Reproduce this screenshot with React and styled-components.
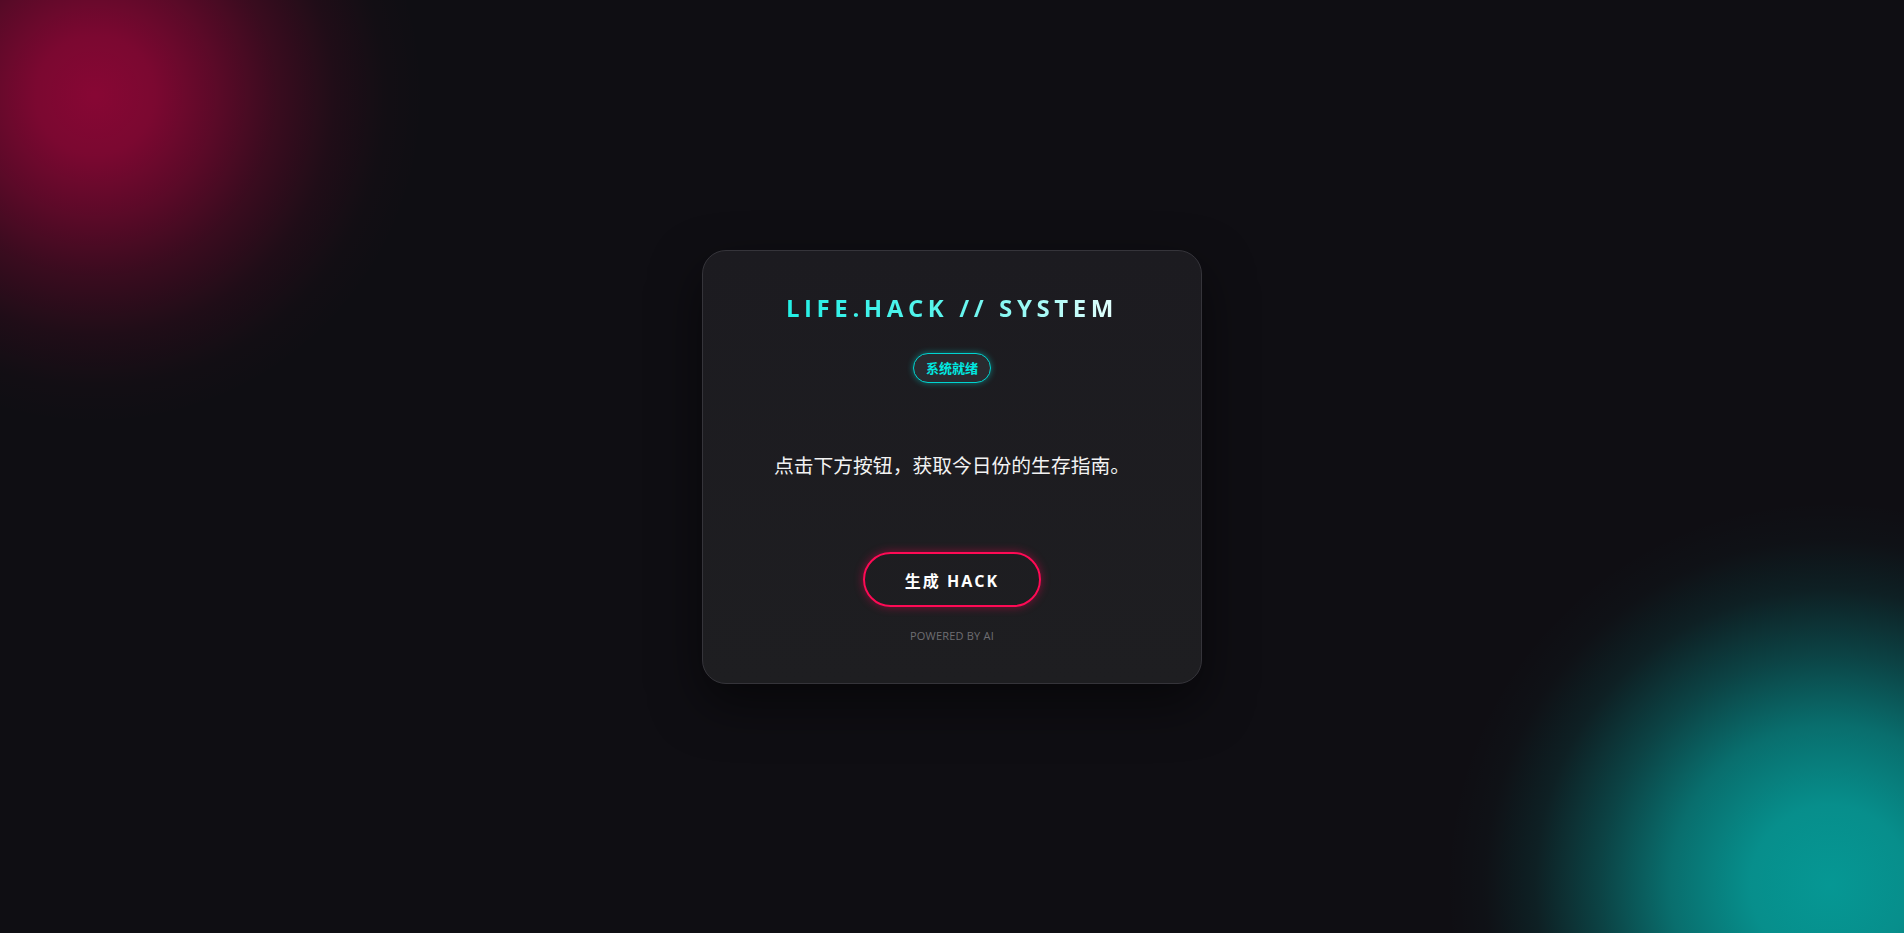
import React from 'react'
import styled, { createGlobalStyle } from 'styled-components'

const GlobalStyle = createGlobalStyle`
html, body {
  margin: 0;
  padding: 0;
  background: #0f0e13;
}
* {
  box-sizing: border-box;
}
`

const App = () => {
  return (
    <>
      <GlobalStyle />
      <Page>
        <Card>
          <Title>LIFE.HACK // SYSTEM</Title>
          <Badge>系统就绪</Badge>
          <Message>点击下方按钮，获取今日份的生存指南。</Message>
          <HackButton>生成 HACK</HackButton>
          <Footer>POWERED BY AI</Footer>
        </Card>
      </Page>
    </>
  )
}

export default App

const Page = styled.div`
min-height: 100vh;
display: flex;
align-items: center;
justify-content: center;
font-family: "Open Sans", "Noto Sans CJK SC", sans-serif;
background-color: #0f0e13;
background-image:
  radial-gradient(circle at 95px 95px,
    rgba(255, 0, 85, 0.5) 0px,
    rgba(255, 0, 85, 0.45) 60px,
    rgba(255, 0, 85, 0.32) 120px,
    rgba(255, 0, 85, 0.18) 180px,
    rgba(255, 0, 85, 0.07) 240px,
    rgba(255, 0, 85, 0.015) 290px,
    rgba(255, 0, 85, 0) 330px),
  radial-gradient(circle at 1830px 885px,
    rgba(0, 243, 234, 0.6) 0px,
    rgba(0, 243, 234, 0.56) 80px,
    rgba(0, 243, 234, 0.42) 160px,
    rgba(0, 243, 234, 0.23) 230px,
    rgba(0, 243, 234, 0.08) 295px,
    rgba(0, 243, 234, 0.015) 345px,
    rgba(0, 243, 234, 0) 385px);
background-repeat: no-repeat;
`

const Card = styled.div`
width: 500px;
height: 434px;
padding: 41px 40px 0;
display: flex;
flex-direction: column;
align-items: center;
border: 1px solid #35343a;
border-radius: 24px;
background: linear-gradient(180deg, #1c1b20 0%, #1e1e21 100%);
box-shadow: 0 20px 50px rgba(0, 0, 0, 0.5);
`

const Title = styled.h1`
margin: 0;
font-size: 24px;
font-weight: 700;
line-height: 1.3;
letter-spacing: 4.6px;
background: linear-gradient(90deg, #22f0e6 0%, #5ef5ee 50%, #e6fffd 100%);
-webkit-background-clip: text;
background-clip: text;
color: transparent;
`

const Badge = styled.div`
margin-top: 30px;
padding: 0 12px;
height: 30px;
display: flex;
align-items: center;
border: 1px solid #00d4d0;
border-radius: 15px;
background: #2a2a2f;
color: #00e8e0;
font-family: "Noto Sans CJK SC", sans-serif;
font-size: 13px;
font-weight: 700;
box-shadow: 0 0 6px rgba(0, 230, 225, 0.45);
`

const Message = styled.p`
margin: 68px 0 0;
font-family: "Noto Sans CJK SC", sans-serif;
font-size: 19.8px;
line-height: 1.4;
color: #f2f2f2;
`

const HackButton = styled.button`
margin-top: 74px;
width: 178px;
height: 55px;
border: 2px solid #ff0a55;
border-radius: 28px;
background: transparent;
color: #ffffff;
font-family: "Open Sans", "Noto Sans CJK SC", sans-serif;
font-size: 16px;
font-weight: 700;
letter-spacing: 2px;
box-shadow: 0 0 10px rgba(255, 0, 85, 0.45);
cursor: pointer;
`

const Footer = styled.div`
margin-top: 21px;
font-size: 11px;
color: #6e6e72;
letter-spacing: 0.2px;
`
